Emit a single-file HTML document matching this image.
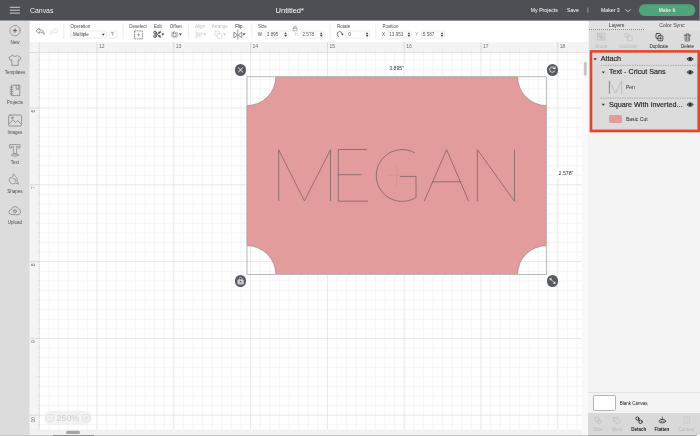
<!DOCTYPE html>
<html>
<head>
<meta charset="utf-8">
<title>Canvas</title>
<style>
*{box-sizing:border-box;margin:0;padding:0}
html,body{width:700px;height:436px;overflow:hidden;background:#fff}
body{font-family:"Liberation Sans",sans-serif;position:relative;color:#333}
.abs{position:absolute}
#side{left:0;top:20.6px;width:29px;height:414.4px;background:#dcdcdc;box-shadow:1px 0 0 #e7e7e7}
#tb{left:29.6px;top:20.8px;width:559px;height:21px;background:#fff}
#cv{left:0;top:0;width:700px;height:436px}
.gm{stroke:#ededed;stroke-width:.6}
.gM{stroke:#dedede;stroke-width:.7}
.tm{stroke:#e4e4e4;stroke-width:.8}
.tM{stroke:#d6d6d6;stroke-width:.9}
#rp{left:588.2px;top:20.8px;width:111.8px;height:415.2px;background:#f4f4f4}
.al{font-size:4.5px;color:#222;transform:translate(-50%,-50%)}
.al.d{color:#b9b9b9}
.hand{position:absolute;width:11.6px;height:11.6px;border-radius:50%;background:#575a60}
</style>
</head>
<body>
<div id="wrap" style="position:absolute;left:0;top:0;width:700px;height:436px;will-change:opacity;opacity:.999">

<!-- canvas + grid -->
<svg id="cv" class="abs" width="700" height="436" viewBox="0 0 700 436">
  <rect x="29.6" y="41.8" width="559" height="394.2" fill="#fff"/>
  <!-- rulers bg -->
  <rect x="29.6" y="41.8" width="559.4" height="10.7" fill="#f4f4f4"/>
  <rect x="29.6" y="41.8" width="9.7" height="394.2" fill="#f4f4f4"/>
  <line x1="39.40" y1="52.5" x2="39.40" y2="429.6" class="gm"/>
<line x1="49.00" y1="52.5" x2="49.00" y2="429.6" class="gm"/>
<line x1="58.60" y1="52.5" x2="58.60" y2="429.6" class="gm"/>
<line x1="68.20" y1="52.5" x2="68.20" y2="429.6" class="gm"/>
<line x1="77.80" y1="52.5" x2="77.80" y2="429.6" class="gm"/>
<line x1="87.40" y1="52.5" x2="87.40" y2="429.6" class="gm"/>
<line x1="97.00" y1="52.5" x2="97.00" y2="429.6" class="gM"/>
<line x1="106.60" y1="52.5" x2="106.60" y2="429.6" class="gm"/>
<line x1="116.20" y1="52.5" x2="116.20" y2="429.6" class="gm"/>
<line x1="125.80" y1="52.5" x2="125.80" y2="429.6" class="gm"/>
<line x1="135.40" y1="52.5" x2="135.40" y2="429.6" class="gm"/>
<line x1="145.00" y1="52.5" x2="145.00" y2="429.6" class="gm"/>
<line x1="154.60" y1="52.5" x2="154.60" y2="429.6" class="gm"/>
<line x1="164.20" y1="52.5" x2="164.20" y2="429.6" class="gm"/>
<line x1="173.80" y1="52.5" x2="173.80" y2="429.6" class="gM"/>
<line x1="183.40" y1="52.5" x2="183.40" y2="429.6" class="gm"/>
<line x1="193.00" y1="52.5" x2="193.00" y2="429.6" class="gm"/>
<line x1="202.60" y1="52.5" x2="202.60" y2="429.6" class="gm"/>
<line x1="212.20" y1="52.5" x2="212.20" y2="429.6" class="gm"/>
<line x1="221.80" y1="52.5" x2="221.80" y2="429.6" class="gm"/>
<line x1="231.40" y1="52.5" x2="231.40" y2="429.6" class="gm"/>
<line x1="241.00" y1="52.5" x2="241.00" y2="429.6" class="gm"/>
<line x1="250.60" y1="52.5" x2="250.60" y2="429.6" class="gM"/>
<line x1="260.20" y1="52.5" x2="260.20" y2="429.6" class="gm"/>
<line x1="269.80" y1="52.5" x2="269.80" y2="429.6" class="gm"/>
<line x1="279.40" y1="52.5" x2="279.40" y2="429.6" class="gm"/>
<line x1="289.00" y1="52.5" x2="289.00" y2="429.6" class="gm"/>
<line x1="298.60" y1="52.5" x2="298.60" y2="429.6" class="gm"/>
<line x1="308.20" y1="52.5" x2="308.20" y2="429.6" class="gm"/>
<line x1="317.80" y1="52.5" x2="317.80" y2="429.6" class="gm"/>
<line x1="327.40" y1="52.5" x2="327.40" y2="429.6" class="gM"/>
<line x1="337.00" y1="52.5" x2="337.00" y2="429.6" class="gm"/>
<line x1="346.60" y1="52.5" x2="346.60" y2="429.6" class="gm"/>
<line x1="356.20" y1="52.5" x2="356.20" y2="429.6" class="gm"/>
<line x1="365.80" y1="52.5" x2="365.80" y2="429.6" class="gm"/>
<line x1="375.40" y1="52.5" x2="375.40" y2="429.6" class="gm"/>
<line x1="385.00" y1="52.5" x2="385.00" y2="429.6" class="gm"/>
<line x1="394.60" y1="52.5" x2="394.60" y2="429.6" class="gm"/>
<line x1="404.20" y1="52.5" x2="404.20" y2="429.6" class="gM"/>
<line x1="413.80" y1="52.5" x2="413.80" y2="429.6" class="gm"/>
<line x1="423.40" y1="52.5" x2="423.40" y2="429.6" class="gm"/>
<line x1="433.00" y1="52.5" x2="433.00" y2="429.6" class="gm"/>
<line x1="442.60" y1="52.5" x2="442.60" y2="429.6" class="gm"/>
<line x1="452.20" y1="52.5" x2="452.20" y2="429.6" class="gm"/>
<line x1="461.80" y1="52.5" x2="461.80" y2="429.6" class="gm"/>
<line x1="471.40" y1="52.5" x2="471.40" y2="429.6" class="gm"/>
<line x1="481.00" y1="52.5" x2="481.00" y2="429.6" class="gM"/>
<line x1="490.60" y1="52.5" x2="490.60" y2="429.6" class="gm"/>
<line x1="500.20" y1="52.5" x2="500.20" y2="429.6" class="gm"/>
<line x1="509.80" y1="52.5" x2="509.80" y2="429.6" class="gm"/>
<line x1="519.40" y1="52.5" x2="519.40" y2="429.6" class="gm"/>
<line x1="529.00" y1="52.5" x2="529.00" y2="429.6" class="gm"/>
<line x1="538.60" y1="52.5" x2="538.60" y2="429.6" class="gm"/>
<line x1="548.20" y1="52.5" x2="548.20" y2="429.6" class="gm"/>
<line x1="557.80" y1="52.5" x2="557.80" y2="429.6" class="gM"/>
<line x1="567.40" y1="52.5" x2="567.40" y2="429.6" class="gm"/>
<line x1="577.00" y1="52.5" x2="577.00" y2="429.6" class="gm"/>
<line x1="39.3" y1="60.00" x2="582.2" y2="60.00" class="gm"/>
<line x1="39.3" y1="69.60" x2="582.2" y2="69.60" class="gm"/>
<line x1="39.3" y1="79.20" x2="582.2" y2="79.20" class="gm"/>
<line x1="39.3" y1="88.80" x2="582.2" y2="88.80" class="gm"/>
<line x1="39.3" y1="98.40" x2="582.2" y2="98.40" class="gm"/>
<line x1="39.3" y1="108.00" x2="582.2" y2="108.00" class="gM"/>
<line x1="39.3" y1="117.60" x2="582.2" y2="117.60" class="gm"/>
<line x1="39.3" y1="127.20" x2="582.2" y2="127.20" class="gm"/>
<line x1="39.3" y1="136.80" x2="582.2" y2="136.80" class="gm"/>
<line x1="39.3" y1="146.40" x2="582.2" y2="146.40" class="gm"/>
<line x1="39.3" y1="156.00" x2="582.2" y2="156.00" class="gm"/>
<line x1="39.3" y1="165.60" x2="582.2" y2="165.60" class="gm"/>
<line x1="39.3" y1="175.20" x2="582.2" y2="175.20" class="gm"/>
<line x1="39.3" y1="184.80" x2="582.2" y2="184.80" class="gM"/>
<line x1="39.3" y1="194.40" x2="582.2" y2="194.40" class="gm"/>
<line x1="39.3" y1="204.00" x2="582.2" y2="204.00" class="gm"/>
<line x1="39.3" y1="213.60" x2="582.2" y2="213.60" class="gm"/>
<line x1="39.3" y1="223.20" x2="582.2" y2="223.20" class="gm"/>
<line x1="39.3" y1="232.80" x2="582.2" y2="232.80" class="gm"/>
<line x1="39.3" y1="242.40" x2="582.2" y2="242.40" class="gm"/>
<line x1="39.3" y1="252.00" x2="582.2" y2="252.00" class="gm"/>
<line x1="39.3" y1="261.60" x2="582.2" y2="261.60" class="gM"/>
<line x1="39.3" y1="271.20" x2="582.2" y2="271.20" class="gm"/>
<line x1="39.3" y1="280.80" x2="582.2" y2="280.80" class="gm"/>
<line x1="39.3" y1="290.40" x2="582.2" y2="290.40" class="gm"/>
<line x1="39.3" y1="300.00" x2="582.2" y2="300.00" class="gm"/>
<line x1="39.3" y1="309.60" x2="582.2" y2="309.60" class="gm"/>
<line x1="39.3" y1="319.20" x2="582.2" y2="319.20" class="gm"/>
<line x1="39.3" y1="328.80" x2="582.2" y2="328.80" class="gm"/>
<line x1="39.3" y1="338.40" x2="582.2" y2="338.40" class="gM"/>
<line x1="39.3" y1="348.00" x2="582.2" y2="348.00" class="gm"/>
<line x1="39.3" y1="357.60" x2="582.2" y2="357.60" class="gm"/>
<line x1="39.3" y1="367.20" x2="582.2" y2="367.20" class="gm"/>
<line x1="39.3" y1="376.80" x2="582.2" y2="376.80" class="gm"/>
<line x1="39.3" y1="386.40" x2="582.2" y2="386.40" class="gm"/>
<line x1="39.3" y1="396.00" x2="582.2" y2="396.00" class="gm"/>
<line x1="39.3" y1="405.60" x2="582.2" y2="405.60" class="gm"/>
<line x1="39.3" y1="415.20" x2="582.2" y2="415.20" class="gM"/>
<line x1="39.3" y1="424.80" x2="582.2" y2="424.80" class="gm"/>
  <line x1="39.40" y1="50.6" x2="39.40" y2="52.5" class="tm"/>
<line x1="49.00" y1="50.6" x2="49.00" y2="52.5" class="tm"/>
<line x1="58.60" y1="48.8" x2="58.60" y2="52.5" class="tm"/>
<line x1="68.20" y1="50.6" x2="68.20" y2="52.5" class="tm"/>
<line x1="77.80" y1="50.6" x2="77.80" y2="52.5" class="tm"/>
<line x1="87.40" y1="50.6" x2="87.40" y2="52.5" class="tm"/>
<line x1="97.00" y1="42" x2="97.00" y2="52.5" class="tM"/>
<line x1="106.60" y1="50.6" x2="106.60" y2="52.5" class="tm"/>
<line x1="116.20" y1="50.6" x2="116.20" y2="52.5" class="tm"/>
<line x1="125.80" y1="50.6" x2="125.80" y2="52.5" class="tm"/>
<line x1="135.40" y1="48.8" x2="135.40" y2="52.5" class="tm"/>
<line x1="145.00" y1="50.6" x2="145.00" y2="52.5" class="tm"/>
<line x1="154.60" y1="50.6" x2="154.60" y2="52.5" class="tm"/>
<line x1="164.20" y1="50.6" x2="164.20" y2="52.5" class="tm"/>
<line x1="173.80" y1="42" x2="173.80" y2="52.5" class="tM"/>
<line x1="183.40" y1="50.6" x2="183.40" y2="52.5" class="tm"/>
<line x1="193.00" y1="50.6" x2="193.00" y2="52.5" class="tm"/>
<line x1="202.60" y1="50.6" x2="202.60" y2="52.5" class="tm"/>
<line x1="212.20" y1="48.8" x2="212.20" y2="52.5" class="tm"/>
<line x1="221.80" y1="50.6" x2="221.80" y2="52.5" class="tm"/>
<line x1="231.40" y1="50.6" x2="231.40" y2="52.5" class="tm"/>
<line x1="241.00" y1="50.6" x2="241.00" y2="52.5" class="tm"/>
<line x1="250.60" y1="42" x2="250.60" y2="52.5" class="tM"/>
<line x1="260.20" y1="50.6" x2="260.20" y2="52.5" class="tm"/>
<line x1="269.80" y1="50.6" x2="269.80" y2="52.5" class="tm"/>
<line x1="279.40" y1="50.6" x2="279.40" y2="52.5" class="tm"/>
<line x1="289.00" y1="48.8" x2="289.00" y2="52.5" class="tm"/>
<line x1="298.60" y1="50.6" x2="298.60" y2="52.5" class="tm"/>
<line x1="308.20" y1="50.6" x2="308.20" y2="52.5" class="tm"/>
<line x1="317.80" y1="50.6" x2="317.80" y2="52.5" class="tm"/>
<line x1="327.40" y1="42" x2="327.40" y2="52.5" class="tM"/>
<line x1="337.00" y1="50.6" x2="337.00" y2="52.5" class="tm"/>
<line x1="346.60" y1="50.6" x2="346.60" y2="52.5" class="tm"/>
<line x1="356.20" y1="50.6" x2="356.20" y2="52.5" class="tm"/>
<line x1="365.80" y1="48.8" x2="365.80" y2="52.5" class="tm"/>
<line x1="375.40" y1="50.6" x2="375.40" y2="52.5" class="tm"/>
<line x1="385.00" y1="50.6" x2="385.00" y2="52.5" class="tm"/>
<line x1="394.60" y1="50.6" x2="394.60" y2="52.5" class="tm"/>
<line x1="404.20" y1="42" x2="404.20" y2="52.5" class="tM"/>
<line x1="413.80" y1="50.6" x2="413.80" y2="52.5" class="tm"/>
<line x1="423.40" y1="50.6" x2="423.40" y2="52.5" class="tm"/>
<line x1="433.00" y1="50.6" x2="433.00" y2="52.5" class="tm"/>
<line x1="442.60" y1="48.8" x2="442.60" y2="52.5" class="tm"/>
<line x1="452.20" y1="50.6" x2="452.20" y2="52.5" class="tm"/>
<line x1="461.80" y1="50.6" x2="461.80" y2="52.5" class="tm"/>
<line x1="471.40" y1="50.6" x2="471.40" y2="52.5" class="tm"/>
<line x1="481.00" y1="42" x2="481.00" y2="52.5" class="tM"/>
<line x1="490.60" y1="50.6" x2="490.60" y2="52.5" class="tm"/>
<line x1="500.20" y1="50.6" x2="500.20" y2="52.5" class="tm"/>
<line x1="509.80" y1="50.6" x2="509.80" y2="52.5" class="tm"/>
<line x1="519.40" y1="48.8" x2="519.40" y2="52.5" class="tm"/>
<line x1="529.00" y1="50.6" x2="529.00" y2="52.5" class="tm"/>
<line x1="538.60" y1="50.6" x2="538.60" y2="52.5" class="tm"/>
<line x1="548.20" y1="50.6" x2="548.20" y2="52.5" class="tm"/>
<line x1="557.80" y1="42" x2="557.80" y2="52.5" class="tM"/>
<line x1="567.40" y1="50.6" x2="567.40" y2="52.5" class="tm"/>
<line x1="577.00" y1="50.6" x2="577.00" y2="52.5" class="tm"/>
<line x1="37.6" y1="60.00" x2="39.3" y2="60.00" class="tm"/>
<line x1="36" y1="69.60" x2="39.3" y2="69.60" class="tm"/>
<line x1="37.6" y1="79.20" x2="39.3" y2="79.20" class="tm"/>
<line x1="37.6" y1="88.80" x2="39.3" y2="88.80" class="tm"/>
<line x1="37.6" y1="98.40" x2="39.3" y2="98.40" class="tm"/>
<line x1="30" y1="108.00" x2="39.3" y2="108.00" class="tM"/>
<line x1="37.6" y1="117.60" x2="39.3" y2="117.60" class="tm"/>
<line x1="37.6" y1="127.20" x2="39.3" y2="127.20" class="tm"/>
<line x1="37.6" y1="136.80" x2="39.3" y2="136.80" class="tm"/>
<line x1="36" y1="146.40" x2="39.3" y2="146.40" class="tm"/>
<line x1="37.6" y1="156.00" x2="39.3" y2="156.00" class="tm"/>
<line x1="37.6" y1="165.60" x2="39.3" y2="165.60" class="tm"/>
<line x1="37.6" y1="175.20" x2="39.3" y2="175.20" class="tm"/>
<line x1="30" y1="184.80" x2="39.3" y2="184.80" class="tM"/>
<line x1="37.6" y1="194.40" x2="39.3" y2="194.40" class="tm"/>
<line x1="37.6" y1="204.00" x2="39.3" y2="204.00" class="tm"/>
<line x1="37.6" y1="213.60" x2="39.3" y2="213.60" class="tm"/>
<line x1="36" y1="223.20" x2="39.3" y2="223.20" class="tm"/>
<line x1="37.6" y1="232.80" x2="39.3" y2="232.80" class="tm"/>
<line x1="37.6" y1="242.40" x2="39.3" y2="242.40" class="tm"/>
<line x1="37.6" y1="252.00" x2="39.3" y2="252.00" class="tm"/>
<line x1="30" y1="261.60" x2="39.3" y2="261.60" class="tM"/>
<line x1="37.6" y1="271.20" x2="39.3" y2="271.20" class="tm"/>
<line x1="37.6" y1="280.80" x2="39.3" y2="280.80" class="tm"/>
<line x1="37.6" y1="290.40" x2="39.3" y2="290.40" class="tm"/>
<line x1="36" y1="300.00" x2="39.3" y2="300.00" class="tm"/>
<line x1="37.6" y1="309.60" x2="39.3" y2="309.60" class="tm"/>
<line x1="37.6" y1="319.20" x2="39.3" y2="319.20" class="tm"/>
<line x1="37.6" y1="328.80" x2="39.3" y2="328.80" class="tm"/>
<line x1="30" y1="338.40" x2="39.3" y2="338.40" class="tM"/>
<line x1="37.6" y1="348.00" x2="39.3" y2="348.00" class="tm"/>
<line x1="37.6" y1="357.60" x2="39.3" y2="357.60" class="tm"/>
<line x1="37.6" y1="367.20" x2="39.3" y2="367.20" class="tm"/>
<line x1="36" y1="376.80" x2="39.3" y2="376.80" class="tm"/>
<line x1="37.6" y1="386.40" x2="39.3" y2="386.40" class="tm"/>
<line x1="37.6" y1="396.00" x2="39.3" y2="396.00" class="tm"/>
<line x1="37.6" y1="405.60" x2="39.3" y2="405.60" class="tm"/>
<line x1="30" y1="415.20" x2="39.3" y2="415.20" class="tM"/>
<line x1="37.6" y1="424.80" x2="39.3" y2="424.80" class="tm"/>
  <line x1="39.3" y1="42" x2="39.3" y2="430" stroke="#c8c8c8" stroke-width=".7" stroke-dasharray="1.2 .8"/>
  <line x1="30" y1="52.5" x2="39.3" y2="52.5" stroke="#a8a8a8" stroke-width=".7" stroke-dasharray="1 1"/>
  <line x1="30" y1="52.5" x2="589" y2="52.5" stroke="#dcdcdc" stroke-width=".8"/>
  <!-- bottom scrollbar strip -->
  <rect x="29.6" y="429.6" width="559" height="5.4" fill="#f1f1f1"/>
  <rect x="0" y="435" width="700" height="1" fill="#c6c6c6"/>
  <rect x="53" y="435" width="41" height="1" fill="#8e8e8e"/>
  <rect x="66" y="430.8" width="14" height="3.2" rx="1.6" fill="#a6a6a6"/>
  <!-- right scrollbar strip -->
  <rect x="582.2" y="52.9" width="6.4" height="381.7" fill="#f9f9f9"/>
  <rect x="583.9" y="61.9" width="2.9" height="13.8" rx="1.45" fill="#c6c6c6"/>

  <rect x="387.5" y="64" width="18.5" height="8" fill="#fff"/><rect x="557" y="168.6" width="18.5" height="9" fill="#fff"/>
  <!-- shape -->
  <path d="M275.8 76.7 H517.6 A28.8 28.8 0 0 0 546.4 105.5 V245.7 A28.8 28.8 0 0 0 517.6 274.5 H275.8 A28.8 28.8 0 0 0 247 245.7 V105.5 A28.8 28.8 0 0 0 275.8 76.7 Z" fill="#e19c9b" stroke="#8d6f70" stroke-width=".5"/>
  <!-- bounding box -->
  <rect x="247" y="76.7" width="299.4" height="197.8" fill="none" stroke="#b8b8b8" stroke-width="1"/>
  <!-- centre cross -->
  <path d="M386 175.3 H399.8 M396.6 165 V186.8" stroke="#ca9391" stroke-width=".6" fill="none"/>
  <!-- MEGAN -->
  <g fill="none" stroke="#6d5356" stroke-width=".65" stroke-linejoin="miter">
    <path d="M278.7 201 V149.8 L304.4 200.9 L330.5 149.8 V201"/>
    <path d="M366.6 149.5 H338.3 V201.2 H367.9 M338.3 174.7 H361.5"/>
    <path d="M415 153 A25.9 25.9 0 1 0 416 197.4 V176.4 H399.8"/>
    <path d="M424.2 201.3 L446.6 149.6 L468.7 201.3 M432.2 181.8 H461"/>
    <path d="M477.4 201.3 V149.6 L514.5 201.3 V149.6"/>
  </g>
</svg>

<!-- header -->
<svg class="abs" style="left:0;top:0" width="700" height="21" viewBox="0 0 700 21">
  <rect x="0" y="0" width="700" height="20.6" fill="#4d4f54"/>
  <rect x="699.1" y="0" width=".9" height="20.6" fill="#808286"/>
  <g stroke="#e4e4e4" stroke-width=".85"><line x1="9.8" y1="7.3" x2="19.9" y2="7.3"/><line x1="9.8" y1="10.2" x2="19.9" y2="10.2"/><line x1="9.8" y1="13.1" x2="19.9" y2="13.1"/></g>
  <rect x="638.9" y="4.3" width="56.4" height="11.7" rx="5.85" fill="#4fa57b"/>
  <path d="M625.4 9.2 L628 11.8 L630.6 9.2" fill="none" stroke="#fff" stroke-width=".7"/>
  <line x1="587.9" y1="7.6" x2="587.9" y2="12.6" stroke="#d0d0d0" stroke-width=".6"/>
</svg>







<!-- sidebar -->
<div id="side" class="abs"></div>
<svg class="abs" style="left:0;top:20.8px" width="30" height="230" viewBox="0 20.8 30 230">
  <g fill="none" stroke="#666" stroke-width=".6" stroke-linejoin="round" stroke-linecap="round">
    <!-- new -->
    <circle cx="15" cy="30.4" r="5.2" stroke="#7a646a" stroke-width=".55"/>
    <path d="M13.2 30.4 H16.8 M15 28.6 V32.2" stroke="#4a4a4a" stroke-width=".8"/>
    <!-- templates (tshirt) -->
    <path d="M12.6 55.4 Q15 57.4 17.4 55.4 L21 57.6 L19.6 60.2 L18.2 59.6 V65.2 H11.8 V59.6 L10.4 60.2 L9 57.6 Z"/>
    <!-- projects (notebook) -->
    <path d="M11.8 85 H19.8 V95.4 H11.8 Z M16.2 85 V89.6 L17.5 88.5 L18.8 89.6 V85 M10.2 87 H12.8 M10.2 89.2 H12.8 M10.2 91.4 H12.8 M10.2 93.6 H12.8"/>
    <!-- images -->
    <rect x="8.6" y="114.8" width="13" height="11" rx="1.4"/><path d="M9 123.8 L13 119.6 L15.6 122.4 L17.6 120.4 L21.2 123.8"/>
    <circle cx="12.2" cy="117.6" r=".9"/>
    <!-- text -->
    <path d="M10 144.4 H20 V147.8 H18.4 V146.4 H16.6 V153.4 H13.4 V146.4 H11.6 V147.8 H10 Z" stroke-width=".55"/>
    <ellipse cx="15" cy="154.8" rx="3.6" ry="1.1" stroke-width=".55"/>
    <!-- shapes -->
    <path d="M13.8 173.8 L15.6 176.4 A3.3 3.3 0 0 1 17 180.2 L18.6 184 L15.2 182.8 A3.7 3.7 0 0 1 10 177.6 L12.4 176.8 Z M13 178.2 L15.4 179 L15.8 181.4" stroke-width=".55"/>
    <!-- upload -->
    <path d="M11.6 214.4 A2.5 2.5 0 0 1 11.4 209.4 A3.7 3.7 0 0 1 18.4 208.6 A3 3 0 0 1 18.6 214.4 Z" stroke-width=".6"/>
    <circle cx="14.8" cy="211" r="1.7" stroke-width=".5"/><path d="M14.8 212 V210.2 M14.1 210.8 L14.8 210.1 L15.5 210.8" stroke-width=".45"/>
  </g>
</svg>








<!-- toolbar -->
<div id="tb" class="abs"></div>





















<svg class="abs" style="left:29.6px;top:20.8px" width="559" height="21" viewBox="29.6 20.8 559 21">
  <line x1="63.5" y1="23.7" x2="63.5" y2="39" stroke="#ececec" stroke-width="1"/>
  <line x1="122.6" y1="23.7" x2="122.6" y2="39" stroke="#ececec" stroke-width="1"/>
  <line x1="187.9" y1="23.7" x2="187.9" y2="39" stroke="#ececec" stroke-width="1"/>
  <line x1="251.5" y1="23.7" x2="251.5" y2="39" stroke="#ececec" stroke-width="1"/>
  <line x1="329.7" y1="23.7" x2="329.7" y2="39" stroke="#ececec" stroke-width="1"/>
  <line x1="375.5" y1="23.7" x2="375.5" y2="39" stroke="#ececec" stroke-width="1"/>
  <rect x="70.5" y="30.7" width="35.7" height="7.2" rx="1.2" fill="#fff" stroke="#e2e2e2" stroke-width=".7"/>
  <rect x="108.9" y="30.7" width="7.4" height="7.2" rx="1.2" fill="#fff" stroke="#e2e2e2" stroke-width=".7"/>
  <rect x="264.5" y="30.7" width="23.2" height="7.2" rx="1.2" fill="#fff" stroke="#e2e2e2" stroke-width=".7"/>
  <rect x="300.4" y="30.7" width="23.2" height="7.2" rx="1.2" fill="#fff" stroke="#e2e2e2" stroke-width=".7"/>
  <rect x="345.6" y="30.7" width="23.6" height="7.2" rx="1.2" fill="#fff" stroke="#e2e2e2" stroke-width=".7"/>
  <rect x="387.2" y="30.7" width="23.3" height="7.2" rx="1.2" fill="#fff" stroke="#e2e2e2" stroke-width=".7"/>
  <rect x="420.9" y="30.7" width="23.2" height="7.2" rx="1.2" fill="#fff" stroke="#e2e2e2" stroke-width=".7"/>
  <g fill="none" stroke="#444" stroke-width=".7" stroke-linejoin="round" stroke-linecap="round">
    <!-- undo -->
    <path d="M36 30.4 L38.8 28 L38.8 29.4 Q43.6 29.6 43.8 34.2 Q42.2 31.7 38.8 31.6 L38.8 32.8 Z" stroke-width=".55"/>
    <!-- redo -->
    <path d="M57.8 30.4 L55 28 L55 29.4 Q50.2 29.6 50 34.2 Q51.6 31.7 55 31.6 L55 32.8 Z" stroke="#d4d4d4" stroke-width=".55"/>
    <!-- deselect -->
    <rect x="134.2" y="30.7" width="7.8" height="8" stroke-dasharray="1.2 1.3" stroke-width=".7" stroke="#666"/>
    <path d="M136.9 34.6 H139.5 M138.2 33.3 V35.9" stroke-width=".6" stroke="#777"/>
    <!-- edit (scissors) -->
    <g stroke="#333" stroke-width=".8"><circle cx="154.6" cy="32.3" r="1.35"/><circle cx="154.6" cy="36" r="1.35"/>
    <path d="M155.6 33.2 L160.2 37 M155.6 35.2 L160.2 31.4"/>
    <circle cx="158.9" cy="32.4" r=".9" stroke-width=".55"/><circle cx="158.9" cy="36" r=".9" stroke-width=".55"/></g>
    <!-- offset -->
    <path d="M174.2 31 L175.3 32.3 L177 32 L176.8 33.7 L178 34.4 L176.8 35.3 L177 36.9 L175.3 36.6 L174.2 37.8 L173.1 36.6 L171.4 36.9 L171.6 35.3 L170.4 34.4 L171.6 33.7 L171.4 32 L173.1 32.3 Z" stroke-width=".5" stroke="#8a8a8a"/>
    <rect x="172.6" y="32.9" width="3.2" height="3.2" rx=".6" stroke-width=".6" stroke="#555"/>
    <!-- align (disabled) -->
    <g stroke="#d0d0d0"><path d="M195.8 31 V38.6" stroke-dasharray="1 .6" stroke-width=".6"/><path d="M196.8 32.7 H201.6 V34.2 H196.8 M196.8 35.2 H199.8 V36.7 H196.8" stroke-width=".6"/></g>
    <!-- arrange (disabled) -->
    <g stroke="#d0d0d0" stroke-width=".6"><rect x="214.4" y="30.9" width="4.6" height="4.6" rx="1"/><rect x="216.6" y="33.6" width="4.8" height="4.8" rx="1" fill="#fff"/></g>
    <!-- flip -->
    <path d="M237.4 29.6 V39" stroke-dasharray=".9 .6" stroke-width=".5"/>
    <path d="M236.6 34.6 L233.6 31.9 V37.3 Z M238.3 34.6 L241.4 31.9 V37.3 Z" stroke-width=".6"/>
    <!-- size lock -->
    <path d="M293 28 H296.4 Q296.8 28 296.8 28.4 V30.2 Q296.8 30.6 296.4 30.6 H293 Q292.6 30.6 292.6 30.2 V28.4 Q292.6 28 293 28 Z M293.6 28 V27 A1.1 1.1 0 0 1 295.8 27 V28" stroke-width=".5" stroke="#6a6a6a"/>
    <path d="M288.6 30 Q288.8 28.8 290.6 28.8 M300.8 30 Q300.6 28.8 298.8 28.8" stroke="#ddd" stroke-width=".5"/>
    <!-- rotate -->
    <path d="M338.1 36.3 A2.6 2.6 0 1 1 341.9 33.8" stroke-width=".75"/><path d="M340.6 33.5 L343.2 33.5 L341.9 35.2 Z" fill="#444" stroke="none"/>
  </g>
  <g fill="#333">
    <path d="M101.45 33.55 L104.35 33.55 L102.90 35.45 Z"/>
    <path d="M160.95 33.35 L163.85 33.35 L162.40 35.25 Z"/>
    <path d="M178.55 33.35 L181.45 33.35 L180.00 35.25 Z"/>
    <path d="M203.15 33.35 L206.05 33.35 L204.60 35.25 Z" fill="#c2c2c2"/>
    <path d="M222.65 33.35 L225.55 33.35 L224.10 35.25 Z" fill="#c2c2c2"/>
    <path d="M242.15 33.35 L245.05 33.35 L243.60 35.25 Z"/>
    <!-- spinners -->
    <defs><g id="sp"><path d="M-1.35 -.4 L1.35 -.4 L0 -2.4 Z M-1.35 .4 L1.35 .4 L0 2.4 Z"/></g></defs>
  </g>
  <g fill="#444">
    <use href="#sp" x="285.2" y="34.4"/><use href="#sp" x="320.9" y="34.4"/><use href="#sp" x="366.7" y="34.4"/><use href="#sp" x="408.5" y="34.4"/><use href="#sp" x="441.6" y="34.4"/>
  </g>
</svg>


<!-- dimension labels & handles -->


<div class="hand" style="left:234.7px;top:64.1px"></div>
<div class="hand" style="left:546.6px;top:64.1px"></div>
<div class="hand" style="left:234.8px;top:275.1px"></div>
<div class="hand" style="left:546.7px;top:275px"></div>
<svg class="abs" style="left:230px;top:60px" width="335" height="230" viewBox="230 60 335 230">
  <g fill="none" stroke="#fff" stroke-width=".9" stroke-linecap="round" stroke-linejoin="round">
    <path d="M238.4 67.8 L242.6 72 M242.6 67.8 L238.4 72"/>
    <path d="M554.6 71.2 A2.7 2.7 0 1 1 554.9 68.4 M555.3 66.9 L555 68.8 L553.2 68.5" stroke-width=".8"/>
    <path d="M239.3 279.6 V278.7 A1.3 1.3 0 0 1 241.9 278.7 V279.6" stroke="#c9cacd" stroke-width=".8"/><rect x="237.4" y="279.5" width="6.4" height="4.9" rx=".8" fill="#c9cacd" stroke="none"/><circle cx="240.6" cy="281.8" r=".75" fill="#575a60" stroke="none"/>
    <path d="M550.8 279.4 L554.4 282.6" stroke-width=".8" stroke="#e6e6e6"/><path d="M549.4 278.1 L552.2 278.6 L550 280.8 Z M555.7 283.9 L552.9 283.4 L555.1 281.2 Z" fill="#e6e6e6" stroke="none"/>
  </g>
</svg>

<!-- zoom control -->
<div class="abs" style="left:43.9px;top:411.1px;width:48.3px;height:13.7px;border-radius:6.85px;background:rgba(238,238,238,.7)"></div>
<svg class="abs" style="left:43px;top:410px" width="52" height="16" viewBox="43 410 52 16">
  <g fill="none" stroke="#d3d3d3" stroke-width=".6">
    <circle cx="50" cy="418" r="3.9"/><circle cx="86.2" cy="418" r="3.9"/>
    <path d="M48.2 418 H51.8 M84.4 418 H88 M86.2 416.2 V419.8"/>
  </g>
</svg>


<!-- right panel -->
<div id="rp" class="abs"></div>
<div class="abs" style="left:589px;top:20.8px;width:111px;height:8.8px;background:#e1e1e1"></div>
<div class="abs" style="left:589px;top:29.2px;width:55px;height:0;border-top:1px dotted #8a8a8a"></div>
<div class="abs" style="left:589px;top:29.8px;width:111px;height:20.4px;background:#dcdcdc"></div>







<!-- layers box -->
<svg class="abs" style="left:588px;top:49px" width="112" height="85" viewBox="588 49 112 85"><rect x="590.95" y="51.45" width="107.8" height="79.5" fill="#dcdcdc" stroke="#e9432c" stroke-width="2.7"/><path d="M592.4 52.9 H697.4" stroke="#dcdcdc" stroke-width=".6" stroke-dasharray="1.1 1.1" fill="none"/><path d="M600.6 65.4 H697.5 M600.6 98.1 H697.5" stroke="#909090" stroke-width=".7" stroke-dasharray="1.4 1" fill="none"/></svg>




<div class="abs" style="left:608.9px;top:115.2px;width:13px;height:8.3px;border-radius:1.6px;background:#e49b9a"></div>


<!-- bottom of right panel -->
<div class="abs" style="left:588.2px;top:392.4px;width:111.8px;height:0;border-top:.7px solid #e4e4e4"></div>
<div class="abs" style="left:592.5px;top:395.2px;width:23.2px;height:15.4px;background:#fff;border:1px solid #b4b4b4;border-radius:1.5px"></div>

<div class="abs" style="left:588.2px;top:413.4px;width:111.8px;height:21.2px;background:#d9d9d9;border-radius:0 0 2.5px 2.5px"></div>
<div class="abs" style="left:588.2px;top:435px;width:109px;height:1px;background:#a6a6a6;border-radius:0 0 1px 0"></div>






<svg class="abs" style="left:588px;top:20.8px" width="112" height="415.2" viewBox="588 20.8 112 415.2">
  <g fill="none" stroke="#333" stroke-width=".6" stroke-linejoin="round" stroke-linecap="round">
    <!-- group (disabled) -->
    <g stroke="#b9b3b3"><rect x="597.6" y="33" width="7.4" height="6.8" stroke-dasharray="1.2 .8"/><rect x="599.2" y="34.4" width="2.8" height="2.6"/><rect x="600.8" y="35.9" width="2.6" height="2.5"/></g>
    <!-- ungroup (disabled) -->
    <g stroke="#bcbcbc"><rect x="625" y="33.4" width="3.6" height="3.6" stroke-dasharray="1 .6"/><rect x="627.8" y="35.6" width="4.4" height="4.8"/></g>
    <!-- duplicate -->
    <g stroke="#222" stroke-width=".75"><rect x="656" y="33.3" width="4.6" height="5" rx="1"/><rect x="658" y="35.4" width="4.8" height="5.2" rx="1" fill="#dcdcdc"/>
    <path d="M659.2 38 H661.6 M660.4 36.8 V39.2" stroke-width=".6"/></g>
    <!-- delete -->
    <path d="M684.2 35 H690.6 M685.1 35 V40.2 Q685.1 40.8 685.7 40.8 H689.1 Q689.7 40.8 689.7 40.2 V35 M686.2 34.8 V33.7 H688.6 V34.8 M686.6 36.4 V39.4 M688.2 36.4 V39.4" stroke="#333" stroke-width=".6"/>
    <!-- slice (disabled) -->
    <g stroke="#bcbcbc"><rect x="595.4" y="417.2" width="3.6" height="3.6"/><circle cx="599.4" cy="421.4" r="2.1"/></g>
    <!-- weld (disabled) -->
    <g stroke="#bcbcbc"><path d="M614 417.4 H617.6 V419.4 A2.2 2.2 0 1 1 616 423 V421 H614 Z"/></g>
    <!-- detach -->
    <g stroke="#222" stroke-width=".85"><circle cx="637.4" cy="418.3" r="1.55"/><circle cx="640.5" cy="421.6" r="1.75"/><path d="M638.4 419.5 L639.3 420.4" stroke-width="1.1"/></g>
    <!-- flatten -->
    <g stroke="#2a2a2a" stroke-width=".7"><ellipse cx="662.3" cy="421" rx="3.3" ry="1.8"/><path d="M660.6 421.2 Q662.3 422.3 664 421.2" stroke-width=".6"/><path d="M662.3 416.8 V419.6 M661.3 418.8 L662.3 419.8 L663.3 418.8" stroke-width=".6"/></g>
    <!-- contour (disabled) -->
    <g stroke="#c4c4c4"><rect x="683.6" y="417" width="6" height="6" stroke-dasharray="1.2 .8"/><path d="M685.4 419 L687.8 421.4 M687.8 419 L685.4 421.4" stroke-width=".4"/></g>
    <!-- M pen icon -->
    <path d="M609.4 93.1 V81 L615.5 93 L621.6 81 V93.1" stroke="#a2a2a2" stroke-width=".5"/><path d="M609.4 93.1 V81" stroke="#7d5960" stroke-width=".55" stroke-dasharray="1 .7"/>
  </g>
  <g fill="#333">
    <path d="M593.5 58.1 L596.7 58.1 L595.1 60.2 Z"/>
    <path d="M601.7 71.2 L604.9 71.2 L603.3 73.3 Z"/>
    <path d="M601.7 103.5 L604.9 103.5 L603.3 105.6 Z"/>
  </g>
  <!-- eyes -->
  <defs><g id="eye" fill="none" stroke="#333" stroke-width=".6"><path d="M-3.2 0 Q0 -3.5 3.2 0 Q0 3.5 -3.2 0 Z" stroke-width=".9" fill="#a0a0a0"/><circle cx="0" cy="0" r="1.25" fill="#2a2a2a"/></g></defs>
  <use href="#eye" x="690.1" y="58.9"/><use href="#eye" x="690.1" y="72.1"/><use href="#eye" x="690.1" y="104.4"/>
</svg>
<svg class="abs" style="left:0;top:0;font-family:'Liberation Sans',sans-serif" width="700" height="436" viewBox="0 0 700 436">
<text x="30.0" y="13" text-anchor="start" style="font-size:6.9px;fill:#efefef">Canvas</text>
<text x="289.8" y="13" text-anchor="middle" style="font-size:7.5px;fill:#fff">Untitled*</text>
<text x="530.8" y="12" text-anchor="start" style="font-size:5.2px;fill:#fff">My Projects</text>
<text x="567.0" y="12" text-anchor="start" style="font-size:5.2px;fill:#fff">Save</text>
<text x="601.0" y="12" text-anchor="start" style="font-size:5.2px;fill:#fff">Maker 3</text>
<text x="667.1" y="12" text-anchor="middle" style="font-size:4.9px;fill:#ece6e8;font-weight:bold">Make It</text>
<text x="15.0" y="44" text-anchor="middle" style="font-size:4.5px;fill:#4c4c4c">New</text>
<text x="15.0" y="74" text-anchor="middle" style="font-size:4.5px;fill:#4c4c4c">Templates</text>
<text x="15.0" y="104" text-anchor="middle" style="font-size:4.5px;fill:#4c4c4c">Projects</text>
<text x="15.0" y="134" text-anchor="middle" style="font-size:4.5px;fill:#4c4c4c">Images</text>
<text x="15.0" y="164" text-anchor="middle" style="font-size:4.5px;fill:#4c4c4c">Text</text>
<text x="15.0" y="193" text-anchor="middle" style="font-size:4.5px;fill:#4c4c4c">Shapes</text>
<text x="15.0" y="224" text-anchor="middle" style="font-size:4.5px;fill:#4c4c4c">Upload</text>
<text x="70.4" y="28" text-anchor="start" style="font-size:4.5px;fill:#4c4c4c">Operation</text>
<text x="73.0" y="36" text-anchor="start" style="font-size:4.6px;fill:#3c3c3c">Multiple</text>
<text x="112.4" y="36" text-anchor="middle" style="font-size:4.6px;fill:#3c3c3c">?</text>
<text x="138.0" y="28" text-anchor="middle" style="font-size:4.5px;fill:#4c4c4c">Deselect</text>
<text x="158.0" y="28" text-anchor="middle" style="font-size:4.5px;fill:#4c4c4c">Edit</text>
<text x="175.7" y="28" text-anchor="middle" style="font-size:4.5px;fill:#4c4c4c">Offset</text>
<text x="200.0" y="28" text-anchor="middle" style="font-size:4.5px;fill:#bdbdbd">Align</text>
<text x="219.8" y="28" text-anchor="middle" style="font-size:4.5px;fill:#bdbdbd">Arrange</text>
<text x="239.0" y="28" text-anchor="middle" style="font-size:4.5px;fill:#1c1c1c">Flip</text>
<text x="257.9" y="28" text-anchor="start" style="font-size:4.5px;fill:#4c4c4c">Size</text>
<text x="259.9" y="36" text-anchor="middle" style="font-size:4.5px;fill:#4c4c4c">W</text>
<text x="266.8" y="36" text-anchor="start" style="font-size:4.6px;fill:#5a5a5a">3.895</text>
<text x="296.1" y="36" text-anchor="middle" style="font-size:4.5px;fill:#bdbdbd">H</text>
<text x="302.5" y="36" text-anchor="start" style="font-size:4.6px;fill:#5a5a5a">2.578</text>
<text x="337.0" y="28" text-anchor="start" style="font-size:4.5px;fill:#4c4c4c">Rotate</text>
<text x="348.2" y="36" text-anchor="start" style="font-size:4.6px;fill:#5a5a5a">0</text>
<text x="382.4" y="28" text-anchor="start" style="font-size:4.5px;fill:#4c4c4c">Position</text>
<text x="383.6" y="36" text-anchor="middle" style="font-size:4.5px;fill:#4c4c4c">X</text>
<text x="389.3" y="36" text-anchor="start" style="font-size:4.6px;fill:#5a5a5a">13.953</text>
<text x="416.7" y="36" text-anchor="middle" style="font-size:4.5px;fill:#8a8a8a">Y</text>
<text x="422.8" y="36" text-anchor="start" style="font-size:4.6px;fill:#5a5a5a">5.587</text>
<text x="396.6" y="70" text-anchor="middle" style="font-size:5.2px;fill:#333">3.895&quot;</text>
<text x="566.0" y="175" text-anchor="middle" style="font-size:5.2px;fill:#333">2.578&quot;</text>
<text x="67.9" y="421" text-anchor="middle" style="font-size:8.9px;fill:#cdcdcd">250%</text>
<text x="616.6" y="27" text-anchor="middle" style="font-size:5.2px;fill:#333">Layers</text>
<text x="672.0" y="27" text-anchor="middle" style="font-size:5.2px;fill:#444">Color Sync</text>
<text x="601.0" y="48" text-anchor="middle" style="font-size:4.5px;fill:#b9b9b9">Group</text>
<text x="628.4" y="48" text-anchor="middle" style="font-size:4.5px;fill:#b9b9b9">UnGroup</text>
<text x="659.0" y="48" text-anchor="middle" style="font-size:4.5px;fill:#222">Duplicate</text>
<text x="687.4" y="48" text-anchor="middle" style="font-size:4.5px;fill:#222">Delete</text>
<text x="600.7" y="61" text-anchor="start" style="font-size:7.2px;fill:#222;stroke:#222;stroke-width:.15">Attach</text>
<text x="608.9" y="74" text-anchor="start" style="font-size:7.2px;fill:#222;stroke:#222;stroke-width:.15">Text - Cricut Sans</text>
<text x="625.9" y="89" text-anchor="start" style="font-size:5.1px;fill:#2a2a2a">Pen</text>
<text x="608.9" y="107" text-anchor="start" style="font-size:7.2px;fill:#222;stroke:#222;stroke-width:.15">Square With Inverted...</text>
<text x="625.9" y="121" text-anchor="start" style="font-size:5.1px;fill:#2a2a2a">Basic Cut</text>
<text x="619.8" y="405" text-anchor="start" style="font-size:4.5px;fill:#222">Blank Canvas</text>
<text x="598.0" y="431" text-anchor="middle" style="font-size:4.5px;fill:#b9b9b9">Slice</text>
<text x="616.9" y="431" text-anchor="middle" style="font-size:4.5px;fill:#b9b9b9">Weld</text>
<text x="638.8" y="431" text-anchor="middle" style="font-size:4.5px;fill:#222;font-weight:bold">Detach</text>
<text x="662.0" y="431" text-anchor="middle" style="font-size:4.5px;fill:#222;font-weight:bold">Flatten</text>
<text x="686.6" y="431" text-anchor="middle" style="font-size:4.5px;fill:#b9b9b9">Contour</text>
<text x="99.0" y="48" style="font-size:5px;fill:#6e6e6e">12</text>
<text x="175.8" y="48" style="font-size:5px;fill:#6e6e6e">13</text>
<text x="252.6" y="48" style="font-size:5px;fill:#6e6e6e">14</text>
<text x="329.4" y="48" style="font-size:5px;fill:#6e6e6e">15</text>
<text x="406.2" y="48" style="font-size:5px;fill:#6e6e6e">16</text>
<text x="483.0" y="48" style="font-size:5px;fill:#6e6e6e">17</text>
<text x="559.8" y="48" style="font-size:5px;fill:#6e6e6e">18</text>
<text transform="translate(35,109.7) rotate(-90)" text-anchor="end" style="font-size:5.1px;fill:#686868">6</text>
<text transform="translate(35,186.5) rotate(-90)" text-anchor="end" style="font-size:5.1px;fill:#686868">7</text>
<text transform="translate(35,263.3) rotate(-90)" text-anchor="end" style="font-size:5.1px;fill:#686868">8</text>
<text transform="translate(35,340.1) rotate(-90)" text-anchor="end" style="font-size:5.1px;fill:#686868">9</text>
<text transform="translate(35,416.9) rotate(-90)" text-anchor="end" style="font-size:5.1px;fill:#686868">10</text>
</svg>
</div>
</body>
</html>
